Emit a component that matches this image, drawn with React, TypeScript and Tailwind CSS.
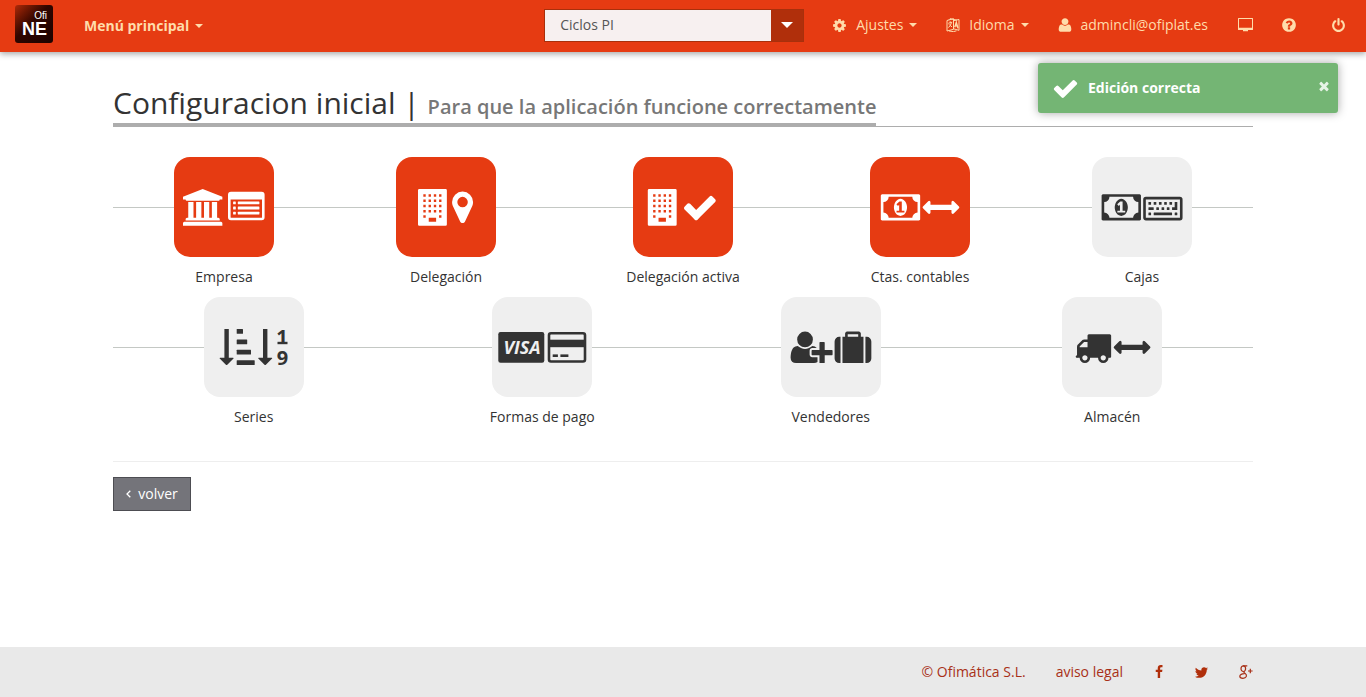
import type { ReactNode } from "react";

const paths = {
  cog: "M1152 896q0-106-75-181t-181-75-181 75-75 181 75 181 181 75 181-75 75-181zm512-109v222q0 12-8 23t-20 13l-185 28q-19 54-39 91 35 50 107 138 10 12 10 25t-9 23q-27 37-99 108t-94 71q-12 0-26-9l-138-108q-44 23-91 38-16 136-29 186-7 28-36 28h-222q-14 0-24.5-8.5t-11.5-21.5l-28-184q-49-16-90-37l-141 107q-10 9-25 9-14 0-25-11-126-114-165-168-7-10-7-23 0-12 8-23 15-21 51-66.5t54-70.5q-27-50-41-99l-183-27q-13-2-21-12.5t-8-23.5v-222q0-12 8-23t19-13l186-28q14-46 39-92-40-57-107-138-10-12-10-24 0-10 9-23 26-36 98.5-107.5t94.5-71.5q13 0 26 10l138 107q44-23 91-38 16-136 29-186 7-28 36-28h222q14 0 24.5 8.5t11.5 21.5l28 184q49 16 90 37l142-107q9-9 24-9 13 0 25 10 129 119 165 170 7 8 7 22 0 12-8 23-15 21-51 66.5t-54 70.5q26 50 41 98l183 28q13 2 21 12.5t8 23.5z",
  user: "M1600 1405q0 120-73 189.5t-194 69.5h-874q-121 0-194-69.5t-73-189.5q0-53 3.5-103.5t14-109 26.5-108.5 43-97.5 62-81 85.5-53.5 111.5-20q9 0 42 21.5t74.5 48 108 48 133.5 21.5 133.5-21.5 108-48 74.5-48 42-21.5q61 0 111.5 20t85.5 53.5 62 81 43 97.5 26.5 108.5 14 109 3.5 103.5zm-320-893q0 159-112.5 271.5t-271.5 112.5-271.5-112.5-112.5-271.5 112.5-271.5 271.5-112.5 271.5 112.5 112.5 271.5z",
  help: "M1024 1376v-192q0-14-9-23t-23-9h-192q-14 0-23 9t-9 23v192q0 14 9 23t23 9h192q14 0 23-9t9-23zm256-672q0-88-55.5-163t-138.5-116-170-41q-243 0-371 213-15 24 8 42l132 100q7 6 19 6 16 0 25-12 53-68 86-92 34-24 86-24 48 0 85.5 26t37.5 59q0 38-20 61t-68 45q-63 28-115.5 86.5t-52.5 125.5v36q0 14 9 23t23 9h192q14 0 23-9t9-23q0-19 21.5-49.5t54.5-49.5q32-18 49-28.5t46-35 44.5-48 28-60.5 12.5-81zm384 192q0 209-103 385.5t-279.5 279.5-385.5 103-385.5-103-279.5-279.5-103-385.5 103-385.5 279.5-279.5 385.5-103 385.5 103 279.5 279.5 103 385.5z",
  power: "M1664 896q0 156-61 298t-164 245-245 164-298 61-298-61-245-164-164-245-61-298q0-182 80.5-343t226.5-270q43-32 95.5-25t83.5 50q32 42 24.5 94.5t-49.5 84.5q-98 74-151.5 181t-53.5 228q0 104 40.5 198.5t109.5 163.5 163.5 109.5 198.5 40.5 198.5-40.5 163.5-109.5 109.5-163.5 40.5-198.5q0-121-53.5-228t-151.5-181q-42-32-49.5-84.5t24.5-94.5q31-43 84-50t95 25q146 109 226.5 270t80.5 343zm-640-768v640q0 52-38 90t-90 38-90-38-38-90v-640q0-52 38-90t90-38 90 38 38 90z",
  check: "M1671 566q0 40-28 68l-724 724-136 136q-28 28-68 28t-68-28l-136-136-362-362q-28-28-28-68t28-68l136-136q28-28 68-28t68 28l294 295 656-657q28-28 68-28t68 28l136 136q28 28 28 68z",
  times: "M1490 1322q0 40-28 68l-136 136q-28 28-68 28t-68-28l-294-294-294 294q-28 28-68 28t-68-28l-136-136q-28-28-28-68t28-68l294-294-294-294q-28-28-28-68t28-68l136-136q28-28 68-28t68 28l294 294 294-294q28-28 68-28t68 28l136 136q28 28 28 68t-28 68l-294 294 294 294q28 28 28 68z",
  bank: "M960 0l960 384v128h-128q0 26-20.5 45t-48.5 19h-1526q-28 0-48.5-19t-20.5-45h-128v-128zm-704 640h256v768h128v-768h256v768h128v-768h256v768h128v-768h256v768h59q28 0 48.5 19t20.5 45v64h-1664v-64q0-26 20.5-45t48.5-19h59v-768zm1595 960q28 0 48.5 19t20.5 45v128h-1920v-128q0-26 20.5-45t48.5-19h1782z",
  marker: "M1152 640q0-106-75-181t-181-75-181 75-75 181 75 181 181 75 181-75 75-181zm256 0q0 109-33 179l-364 774q-16 33-47.5 52t-67.5 19-67.5-19-46.5-52l-365-774q-33-70-33-179 0-212 150-362t362-150 362 150 150 362z",
  money: "M768 1152h384v-96h-128v-448h-114l-148 137 77 80q42-37 55-57h2v288h-128v96zm512-256q0 70-21 142t-59.5 134-101.5 101-138 39-138-39-101.5-101-59.5-134-21-142 21-142 59.5-134 101.5-101 138-39 138 39 101.5 101 59.5 134 21 142zm512 256v-512q-106 0-181-75t-75-181h-1152q0 106-75 181t-181 75v512q106 0 181 75t75 181h1152q0-106 75-181t181-75zm128-832v1152q0 26-19 45t-45 19h-1792q-26 0-45-19t-19-45v-1152q0-26 19-45t45-19h1792q26 0 45 19t19 45z",
  arrows: "M1792 896q0 26-19 45l-256 256q-19 19-45 19t-45-19-19-45v-128h-1024v128q0 26-19 45t-45 19-45-19l-256-256q-19-19-19-45t19-45l256-256q19-19 45-19t45 19 19 45v128h1024v-128q0-26 19-45t45-19 45 19l256 256q19 19 19 45z",
  userPlus: "M704 896q-159 0-271.5-112.5t-112.5-271.5 112.5-271.5 271.5-112.5 271.5 112.5 112.5 271.5-112.5 271.5-271.5 112.5zm960 128h352q13 0 22.5 9.5t9.5 22.5v192q0 13-9.5 22.5t-22.5 9.5h-352v352q0 13-9.5 22.5t-22.5 9.5h-192q-13 0-22.5-9.5t-9.5-22.5v-352h-352q-13 0-22.5-9.5t-9.5-22.5v-192q0-13 9.5-22.5t22.5-9.5h352v-352q0-13 9.5-22.5t22.5-9.5h192q13 0 22.5 9.5t9.5 22.5v352zm-736 224q0 52 38 90t90 38h256v238q-68 50-171 50h-874q-121 0-194-69t-73-190q0-53 3.5-103.5t14-109 26.5-108.5 43-97.5 62-81 85.5-53.5 111.5-20q19 0 39 17 79 61 154.5 91.5t164.5 30.5 164.5-30.5 154.5-91.5q20-17 39-17 132 0 217 96h-223q-52 0-90 38t-38 90v192z",
  suitcase: "M640 384h512v-128h-512v128zm-352 0v1280h-64q-92 0-158-66t-66-158v-832q0-92 66-158t158-66h64zm1120 0v1280h-1024v-1280h128v-160q0-40 28-68t68-28h576q40 0 68 28t28 68v160h128zm384 224v832q0 92-66 158t-158 66h-64v-1280h64q92 0 158 66t66 158z",
  truck: "M640 1408q0-52-38-90t-90-38-90 38-38 90 38 90 90 38 90-38 38-90zm-384-512h384v-256h-158q-13 0-22 9l-195 195q-9 9-9 22v30zm1280 512q0-52-38-90t-90-38-90 38-38 90 38 90 90 38 90-38 38-90zm256-1088v1024q0 15-4 26.5t-13.5 18.5-16.5 11.5-23.5 6-22.5 2-25.5 0-22.5-.5q0 106-75 181t-181 75-181-75-75-181h-384q0 106-75 181t-181 75-181-75-75-181h-64q-3 0-22.5.5t-25.5 0-22.5-2-23.5-6-16.5-11.5-13.5-18.5-4-26.5q0-26 19-45t45-19v-320q0-8-.5-35t0-38 2.5-34.5 6.5-37 14-30.5 22.5-30l198-198q19-19 50.5-32t58.5-13h160v-192q0-26 19-45t45-19h1024q26 0 45 19t19 45z",
  facebook: "M1343 12v264h-157q-86 0-116 36t-30 108v189h293l-39 296h-254v759h-306v-759h-255v-296h255v-218q0-186 104-288.5t277-102.5q147 0 228 12z",
  twitter: "M1684 408q-67 98-162 167 1 14 1 42 0 130-38 259.5t-115.5 248.5-184.5 210.5-258 146-323 54.5q-271 0-496-145 35 4 78 4 225 0 401-138-105-2-188-64.5t-114-159.5q33 5 61 5 43 0 85-11-112-23-185.5-111.5t-73.5-205.5v-4q68 38 146 41-66-44-105-115t-39-154q0-88 44-163 121 149 294.5 238.5t371.5 99.5q-8-38-8-74 0-134 94.5-228.5t228.5-94.5q140 0 236 102 109-21 205-78-37 115-142 178 93-10 186-50z",
};

type IconName = keyof typeof paths;

function Icon({ name, className }: { name: IconName; className: string }) {
  return (
    <svg viewBox="0 0 1792 1792" fill="currentColor" className={className} aria-hidden="true">
      <path d={paths[name]} />
    </svg>
  );
}

/* Places a 1792-unit glyph inside a 100x100 tile drawing */
function Glyph({ name, x }: { name: IconName; x: number }) {
  return <path d={paths[name]} transform={`translate(${x} 32) scale(.0205)`} />;
}

function Building({ x }: { x: number }) {
  const windows: string[] = [];
  for (let row = 0; row < 5; row++) {
    for (let col = 0; col < 4; col++) {
      if (row === 4 && (col === 1 || col === 2)) continue;
      windows.push(`M${260 + col * 256} ${260 + row * 256}v116h116v-116z`);
    }
  }
  return (
    <path
      fillRule="evenodd"
      transform={`translate(${x} 32) scale(.0205)`}
      d={`M64 0h1280q64 0 64 64v1664q0 64-64 64h-1280q-64 0-64-64v-1664q0-64 64-64z M524 1408v190h360v-190z ${windows.join(" ")}`}
    />
  );
}

function ListCard() {
  return (
    <g>
      <path
        fillRule="evenodd"
        d="M57 34.7h30.6a3 3 0 0 1 3 3v22.6a3 3 0 0 1-3 3H57a3 3 0 0 1-3-3V37.7a3 3 0 0 1 3-3zM56.6 42.4V60.2q0 .6.6.6h30.2q.6 0 .6-.6V42.4z"
      />
      {[44.4, 49.6, 54.8].map((y) => (
        <g key={y}>
          <rect x="59.1" y={y} width="2.7" height="2.8" rx=".5" />
          <rect x="63.8" y={y} width="21.6" height="2.8" rx=".5" />
        </g>
      ))}
    </g>
  );
}

function Keyboard() {
  return (
    <g transform="translate(51.2 32) scale(.0205)">
      <rect x="64" y="448" width="1792" height="1024" rx="70" fill="none" stroke="currentColor" strokeWidth="128" />
      {[256, 512, 768, 1024, 1280].map((x) => (
        <rect key={x} x={x} y="640" width="128" height="128" rx="16" />
      ))}
      <rect x="256" y="896" width="256" height="128" rx="16" />
      {[640, 896, 1152].map((x) => (
        <rect key={x} x={x} y="896" width="128" height="128" rx="16" />
      ))}
      <path d="M1536 640h128v384h-256v-128h128z" />
      <rect x="256" y="1152" width="128" height="128" rx="16" />
      <rect x="512" y="1152" width="896" height="128" rx="16" />
      <rect x="1536" y="1152" width="128" height="128" rx="16" />
    </g>
  );
}

function SortIcons() {
  const arrow = "v28.7h4.2q1 0 .5.9l-6.2 6.2q-.7.6-1.4 0l-6.2-6.2q-.5-.9.5-.9h4.2v-28.7z";
  return (
    <g>
      <path d={`M20.4 32h4.4${arrow}`} />
      <path d={`M59 32h4.4${arrow}`} />
      <rect x="32.7" y="32" width="6.3" height="4.8" rx=".5" />
      <rect x="32.7" y="42.4" width="10.5" height="4.8" rx=".5" />
      <rect x="32.7" y="52.8" width="14.3" height="4.8" rx=".5" />
      <rect x="32.7" y="63.2" width="18" height="4.8" rx=".5" />
      <text x="78" y="47" textAnchor="middle" className="font-['Open_Sans',sans-serif] text-[20px] font-bold">1</text>
      <rect x="73.5" y="44.8" width="10" height="2.4" />
      <text x="78.5" y="68" textAnchor="middle" className="font-['Open_Sans',sans-serif] text-[20px] font-bold">9</text>
    </g>
  );
}

function PaymentCards() {
  return (
    <g>
      <rect x="6.3" y="35" width="46" height="30.8" rx="2.2" />
      <text x="30" y="57" textAnchor="middle" className="fill-[#efefef] font-['Open_Sans',sans-serif] text-[18px] font-bold italic">VISA</text>
      <rect x="57" y="36.3" width="36" height="28.2" rx="2" fill="none" stroke="currentColor" strokeWidth="2.6" />
      <rect x="56" y="42.7" width="38" height="7.5" />
      <rect x="60.7" y="57.4" width="5.2" height="2.6" />
      <rect x="68.4" y="57.4" width="8" height="2.6" />
    </g>
  );
}

type Step = { label: string; width: string; done: boolean; art: ReactNode };

const firstRow: Step[] = [
  { label: "Empresa", width: "w-[100px]", done: true, art: <><Glyph name="bank" x={9} /><ListCard /></> },
  { label: "Delegación", width: "w-[100px]", done: true, art: <><Building x={22} /><Glyph name="marker" x={48.2} /></> },
  { label: "Delegación activa", width: "w-[130px]", done: true, art: <><Building x={14.8} /><Glyph name="check" x={48.5} /></> },
  { label: "Ctas. contables", width: "w-[100px]", done: true, art: <><Glyph name="money" x={10.8} /><Glyph name="arrows" x={52.6} /></> },
  { label: "Cajas", width: "w-[100px]", done: false, art: <><Glyph name="money" x={9.6} /><Keyboard /></> },
];

const secondRow: Step[] = [
  { label: "Series", width: "w-[100px]", done: false, art: <SortIcons /> },
  { label: "Formas de pago", width: "w-[114px]", done: false, art: <PaymentCards /> },
  { label: "Vendedores", width: "w-[100px]", done: false, art: <><Glyph name="userPlus" x={9.6} /><Glyph name="suitcase" x={53.6} /></> },
  { label: "Almacén", width: "w-[100px]", done: false, art: <><Glyph name="truck" x={12.4} /><Glyph name="arrows" x={51.7} /></> },
];

function StepRow({ steps }: { steps: Step[] }) {
  return (
    <ul className="flex justify-around bg-[linear-gradient(#c4c8c4,#c4c8c4)] bg-[length:100%_1px] bg-[position:0_50px] bg-no-repeat">
      {steps.map((step) => (
        <li key={step.label} className={step.width}>
          <a href="#" className="flex flex-col items-center">
            <span
              className={
                step.done
                  ? "block size-[100px] rounded-2xl bg-[#e63b12] text-white"
                  : "block size-[100px] rounded-2xl bg-[#efefef] text-[#333333]"
              }
            >
              <svg viewBox="0 0 100 100" fill="currentColor" className="block size-full" aria-hidden="true">
                {step.art}
              </svg>
            </span>
            <span className="leading-10 whitespace-nowrap">{step.label}</span>
          </a>
        </li>
      ))}
    </ul>
  );
}

function Caret() {
  return <span className="border-x-4 border-t-4 border-x-transparent border-t-current" />;
}

function Header() {
  return (
    <header className="flex h-13 items-center bg-[#e63b12] pr-5 pl-[15px] text-[#ffdcab] shadow-[0_2px_6px_rgba(0,0,0,0.35)]">
      <a
        href="#"
        className="mb-1 flex size-[38px] flex-col items-end justify-center rounded-[3px] bg-linear-to-br from-[#b02a0a] via-[#300600] via-45% to-[#1c0300] pr-[6px] font-['Liberation_Sans',sans-serif] text-white"
      >
        <span className="text-[10px] leading-[10px]">Ofi</span>
        <span className="text-lg leading-4 font-bold">NE</span>
      </a>
      <nav className="ml-[31px]">
        <button type="button" className="flex items-center gap-1.5 font-bold">
          Menú principal <Caret />
        </button>
      </nav>
      <div className="mb-0.5 ml-auto flex h-[33px] w-[260px] border border-[#a8300c] bg-[#b02f0b]">
        <select aria-label="Empresa" className="min-w-0 flex-1 appearance-none bg-[#f7f0f0] pl-[15px] text-[#555555]">
          <option>Ciclos PI</option>
        </select>
        <button type="button" aria-label="Abrir lista" className="flex w-8 items-center justify-center text-white">
          <span className="border-x-[6px] border-t-[6px] border-x-transparent border-t-white" />
        </button>
      </div>
      <nav className="mb-0.5 ml-7 flex items-center">
        <button type="button" className="flex items-center">
          <Icon name="cog" className="size-[15px]" />
          <span className="mr-1.5 ml-[9px]">Ajustes</span>
          <Caret />
        </button>
        <button type="button" className="ml-[29px] flex items-center">
          <svg viewBox="0 0 14 14" className="size-3.5" fill="none" stroke="currentColor" aria-hidden="true">
            <path d="M1 2.5 7.5.7v10.6L1 13zM3 1.700 4 .7l7 1.500M7.500 2.700 13 1.500v10.800l-5.500-1.500M3 13l4.500.6 3-.8" />
            <path d="M2.300 5.300 6.200 4.200M4.200 3.300v1.400M5.500 4.600Q4.600 8 2.300 9.600M3 6.300q1.300 1.700 3 2.500" />
            <path d="M8.700 9.200 10.300 4.300 12 10.200M9.300 7.700l2 .5" strokeWidth="1.300" />
          </svg>
          <span className="mr-1.5 ml-[9px]">Idioma</span>
          <Caret />
        </button>
        <a href="#" className="ml-7 flex items-center gap-2">
          <Icon name="user" className="size-4" />
          admincli@ofiplat.es
        </a>
        <a href="#" aria-label="Pantalla" className="ml-[30px]">
          <svg viewBox="0 0 15 14" className="block h-3.5 w-[15px]" fill="currentColor" aria-hidden="true">
            <path fillRule="evenodd" d="M.5 0h14q.5 0 .5.5v11q0 .5-.5.5H10v1.300H5V12H.5Q0 12 0 11.500V.5Q0 0 .5 0zM1 1v8.800h13V1z" />
          </svg>
        </a>
        <a href="#" aria-label="Ayuda" className="ml-7">
          <Icon name="help" className="block size-4" />
        </a>
        <a href="#" aria-label="Salir" className="ml-[34px]">
          <Icon name="power" className="block size-[15px]" />
        </a>
      </nav>
    </header>
  );
}

function Toast() {
  return (
    <div
      role="status"
      className="absolute top-[63px] right-7 flex h-[50px] w-[300px] items-center rounded-[3px] bg-[#74b574] pr-[7px] pl-3.5 text-white shadow-[0_0_10px_rgba(0,0,0,0.35)]"
    >
      <Icon name="check" className="size-[27px]" />
      <strong className="ml-[9px] flex-1">Edición correcta</strong>
      <button type="button" aria-label="Cerrar" className="mb-1 text-[#e6f3e6]">
        <Icon name="times" className="size-3.5" />
      </button>
    </div>
  );
}

export default function App() {
  return (
    <div className="relative flex min-h-screen flex-col bg-white font-['Open_Sans',sans-serif] text-sm text-[#333333]">
      <Header />
      <Toast />
      <main className="mx-auto w-full max-w-[1140px] flex-1">
        <div className="mt-7 flex border-b border-[#adadad]">
          <h1 className="-mb-px border-b-4 border-[#adadad] pt-0.5 text-[30px] leading-[41px]">
            Configuracion inicial |{" "}
            <small className="text-xl font-semibold text-[#777777]">Para que la aplicación funcione correctamente</small>
          </h1>
        </div>
        <div className="mt-[30px]">
          <StepRow steps={firstRow} />
          <StepRow steps={secondRow} />
        </div>
        <hr className="mt-6 border-[#eeeeee]" />
        <button
          type="button"
          className="mt-[15px] flex h-[34px] w-[78px] items-center justify-center gap-[7px] border border-[#4d4d52] bg-[#74747a] text-white"
        >
          <svg viewBox="0 0 5 8" className="h-2 w-[5px]" fill="none" stroke="currentColor" strokeWidth="1.3" aria-hidden="true">
            <path d="M4.3.7 1 4l3.3 3.3" />
          </svg>
          volver
        </button>
      </main>
      <footer className="bg-[#e9e9e9] text-[#a83018]">
        <div className="mx-auto flex h-[50px] w-full max-w-[1140px] items-center justify-end">
          <span>© Ofimática S.L.</span>
          <a href="#" className="ml-[30px]">aviso legal</a>
          <a href="#" aria-label="Facebook" className="ml-[29px] text-[#b02f0b]">
            <Icon name="facebook" className="size-3.5" />
          </a>
          <a href="#" aria-label="Twitter" className="ml-7 text-[#b02f0b]">
            <Icon name="twitter" className="size-[15px]" />
          </a>
          <a href="#" aria-label="Google Plus" className="ml-[30px]">
            <svg viewBox="0 0 14 14" className="size-3.5" fill="none" stroke="currentColor" strokeWidth="1.2" aria-hidden="true">
              <ellipse cx="4.3" cy="3.7" rx="2.3" ry="2.8" />
              <path d="M4 .9h4.3M5.5 6.2Q4 7.2 6.2 8.500 8 9.700 7.300 11.500 6.400 13.300 4 13.300.8 13.200.8 11.200.9 9.100 5.500 8.700M11.300 3.700v4.600M9 6h4.600" />
            </svg>
          </a>
        </div>
      </footer>
    </div>
  );
}
